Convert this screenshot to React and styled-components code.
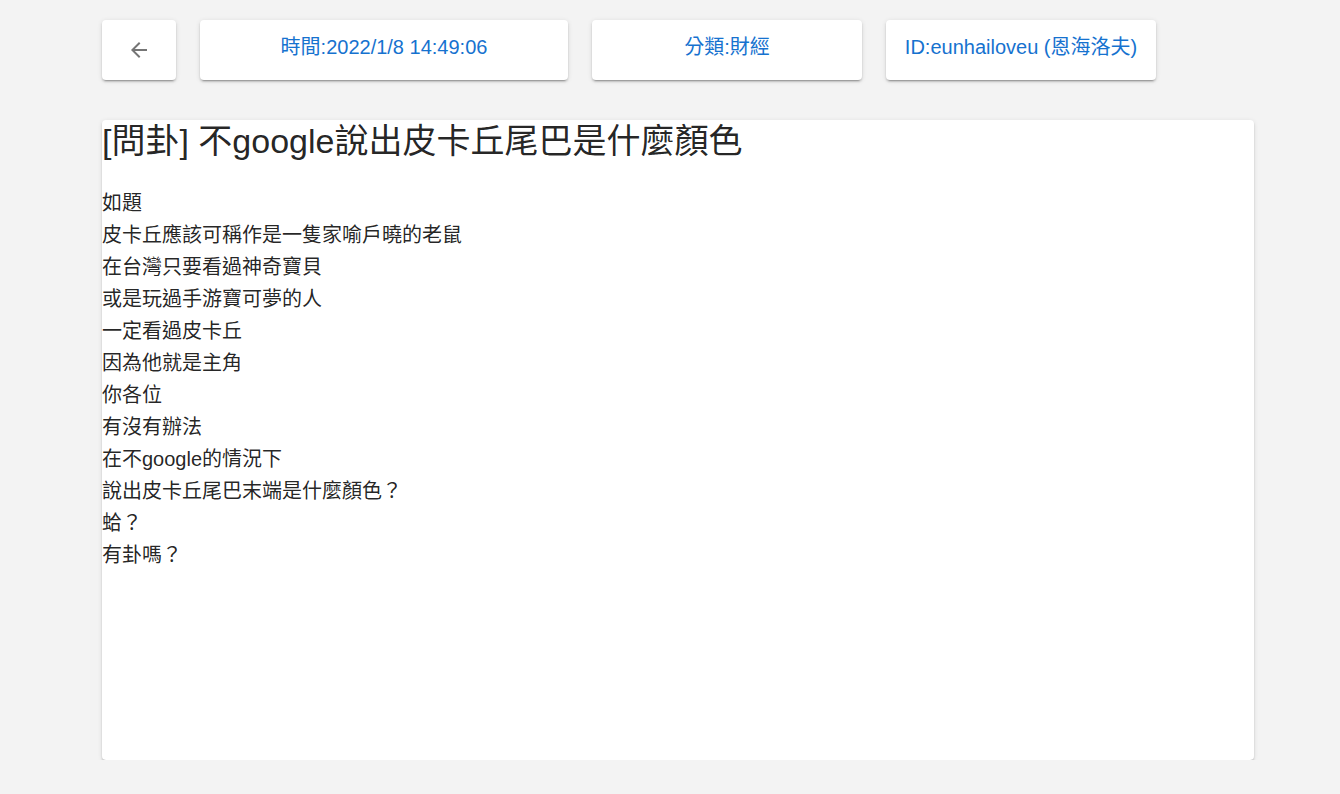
import React from "react";
import styled, { createGlobalStyle } from "styled-components";

const Global = createGlobalStyle`
  html, body { margin: 0; padding: 0; background: #f3f3f3; }
  body { font-family: "Liberation Sans", Arial, "Noto Sans CJK TC", sans-serif; }
`;

const Page = styled.div`
  padding: 20px 86px 0 102px;
  display: flex;
  flex-direction: column;
  gap: 40px;
`;

const Toolbar = styled.div`
  display: flex;
  gap: 24px;
`;

const Button = styled.button`
  height: 60px;
  width: ${(p) => p.$w}px;
  border: none;
  border-radius: 4px;
  background: #fff;
  box-shadow: 0px 3px 1px -2px rgba(0,0,0,0.2), 0px 2px 2px 0px rgba(0,0,0,0.14), 0px 1px 5px 0px rgba(0,0,0,0.12);
  color: #1672cf;
  font-family: "Liberation Sans", Arial, "Noto Sans CJK TC", sans-serif;
  font-size: 20px;
  display: flex;
  align-items: center;
  justify-content: center;
  padding: 0 0 ${(p) => p.$pb ?? 10}px;
  cursor: pointer;
`;

const Paper = styled.div`
  width: 1152px;
  height: 640px;
  background: #fff;
  border-radius: 4px;
  box-shadow: 0px 3px 1px -2px rgba(0,0,0,0.25), 0px 2px 2px 0px rgba(0,0,0,0.14), 0px 1px 5px 0px rgba(0,0,0,0.1);
  color: rgba(0,0,0,0.87);
`;

const Title = styled.h1`
  margin: 0;
  font-size: 34px;
  font-weight: 400;
  line-height: 42px;
`;

const Body = styled.div`
  margin-top: 25px;
  font-size: 20px;
  line-height: 32px;
`;

const Line = styled.div``;

const lines = [
  "如題",
  "皮卡丘應該可稱作是一隻家喻戶曉的老鼠",
  "在台灣只要看過神奇寶貝",
  "或是玩過手游寶可夢的人",
  "一定看過皮卡丘",
  "因為他就是主角",
  "你各位",
  "有沒有辦法",
  "在不google的情況下",
  "說出皮卡丘尾巴末端是什麼顏色？",
  "蛤？",
  "有卦嗎？",
];

const BackIcon = () => (
  <svg width="24" height="24" viewBox="0 0 24 24" fill="#757575">
    <path d="M20 11H7.83l5.59-5.59L12 4l-8 8 8 8 1.41-1.41L7.83 13H20v-2z" />
  </svg>
);

export default function App() {
  return (
    <>
      <Global />
      <Page>
        <Toolbar>
          <Button $w={74} $pb={0}><BackIcon /></Button>
          <Button $w={368}>時間:2022/1/8 14:49:06</Button>
          <Button $w={270}>分類:財經</Button>
          <Button $w={270}>ID:eunhailoveu (恩海洛夫)</Button>
        </Toolbar>
        <Paper>
          <Title>[問卦] 不google說出皮卡丘尾巴是什麼顏色</Title>
          <Body>
            {lines.map((l, i) => (
              <Line key={i}>{l}</Line>
            ))}
          </Body>
        </Paper>
      </Page>
    </>
  );
}
